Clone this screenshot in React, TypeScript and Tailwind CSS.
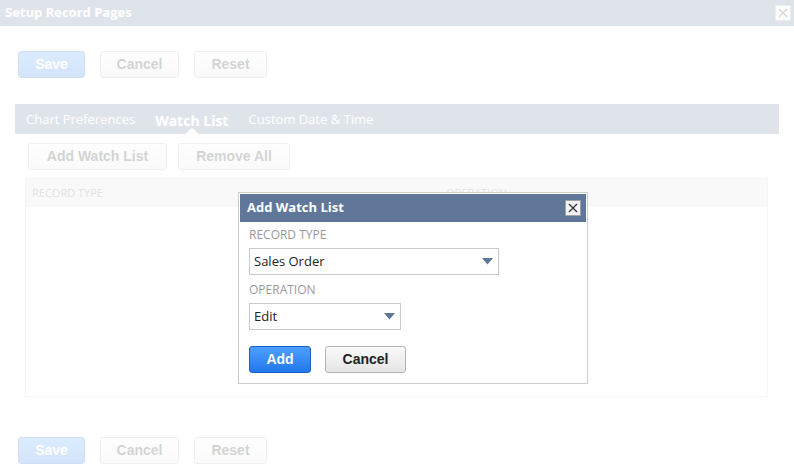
const font = "font-['Open_Sans',_'Liberation_Sans',_sans-serif]";
const btnFont = "font-['Liberation_Sans',_Arial,_sans-serif]";

const CloseBox = ({ className = "" }: { className?: string }) => (
  <div
    className={`flex h-[16px] w-[16px] items-center justify-center border border-[#9aa3b0] bg-[#f4f4f4] ${className}`}
  >
    <svg width="10" height="10" viewBox="0 0 10 10">
      <path d="M1 1 L9 9 M9 1 L1 9" stroke="#333" strokeWidth="1.3" />
    </svg>
  </div>
);

const GrayButton = ({ label, w }: { label: string; w: string }) => (
  <button
    className={`${btnFont} ${w} h-[27px] rounded-[3px] border border-[#b4b4b4] bg-gradient-to-b from-[#fafafa] to-[#e5e5e5] text-[14px] font-bold text-[#222]`}
  >
    {label}
  </button>
);

const BlueButton = ({ label, w }: { label: string; w: string }) => (
  <button
    className={`${btnFont} ${w} h-[27px] rounded-[3px] border border-[#1b5fc4] bg-gradient-to-b from-[#4ea0ff] to-[#1f77ea] text-[14px] font-bold text-white`}
  >
    {label}
  </button>
);

const ActionRow = () => (
  <div className="flex gap-[15px] pl-[18px]">
    <BlueButton label="Save" w="w-[67px]" />
    <GrayButton label="Cancel" w="w-[79px]" />
    <GrayButton label="Reset" w="w-[73px]" />
  </div>
);

const Select = ({ value, w }: { value: string; w: string }) => (
  <div
    className={`${w} flex h-[27px] items-center justify-between border border-[#c9c9c9] bg-white pl-[4px] pr-[5px] text-[13px] text-[#222]`}
  >
    <span>{value}</span>
    <svg width="11" height="7" viewBox="0 0 11 7">
      <path d="M0 0 H11 L5.5 6.5 Z" fill="#607799" />
    </svg>
  </div>
);

export default function App() {
  return (
    <div className={`${font} relative h-[472px] w-[794px] overflow-hidden bg-white`}>
      <div className="flex h-[26px] items-center justify-between bg-[#607799] pl-[5px] pr-[3px]">
        <span className="text-[13px] font-bold text-white">Setup Record Pages</span>
        <CloseBox />
      </div>

      <div className="pt-[25px]">
        <ActionRow />
      </div>

      <div className="ml-[15px] mt-[26px] flex h-[30px] w-[764px] items-stretch gap-[20px] bg-[#607799] pl-[11px] text-[13px] text-white">
        <span className="flex items-center pt-[2px]">Chart Preferences</span>
        <span className="relative flex items-center pt-[2px] text-[14px] font-bold">
          Watch List
          <span className="absolute bottom-0 left-1/2 h-0 w-0 -translate-x-1/2 border-x-[7px] border-b-[6px] border-x-transparent border-b-white" />
        </span>
        <span className="flex items-center pt-[2px]">Custom Date &amp; Time</span>
      </div>

      <div className="mt-[9px] flex gap-[11px] pl-[28px]">
        <GrayButton label="Add Watch List" w="w-[139px]" />
        <GrayButton label="Remove All" w="w-[112px]" />
      </div>

      <div className="ml-[25px] mt-[8px] h-[219px] w-[743px] border border-[#cfcfcf]">
        <div className="grid h-[28px] grid-cols-[414px_1fr] items-center bg-[#e2e2e2] pl-[6px] text-[11px] text-[#666]">
          <span>RECORD TYPE</span>
          <span>OPERATION</span>
        </div>
      </div>

      <div className="pt-[40px]">
        <ActionRow />
      </div>

      <div className="absolute inset-0 bg-white/80" />

      <div className="absolute left-[238px] top-[192px] flex h-[192px] w-[350px] flex-col border border-[#cdcdcd] bg-white p-[1px]">
        <div className="flex h-[28px] items-center justify-between bg-[#607799] pl-[7px] pr-[5px]">
          <span className="text-[13px] font-bold text-white">Add Watch List</span>
          <CloseBox />
        </div>
        <div className="flex flex-col pl-[9px] pt-[4px]">
          <span className="text-[12px] leading-[17px] text-[#999]">RECORD TYPE</span>
          <div className="mt-[5px]">
            <Select value="Sales Order" w="w-[250px]" />
          </div>
          <span className="mt-[6px] text-[12px] leading-[17px] text-[#999]">OPERATION</span>
          <div className="mt-[5px]">
            <Select value="Edit" w="w-[152px]" />
          </div>
          <div className="mt-[16px] flex gap-[14px]">
            <BlueButton label="Add" w="w-[62px]" />
            <GrayButton label="Cancel" w="w-[81px]" />
          </div>
        </div>
      </div>
    </div>
  );
}
